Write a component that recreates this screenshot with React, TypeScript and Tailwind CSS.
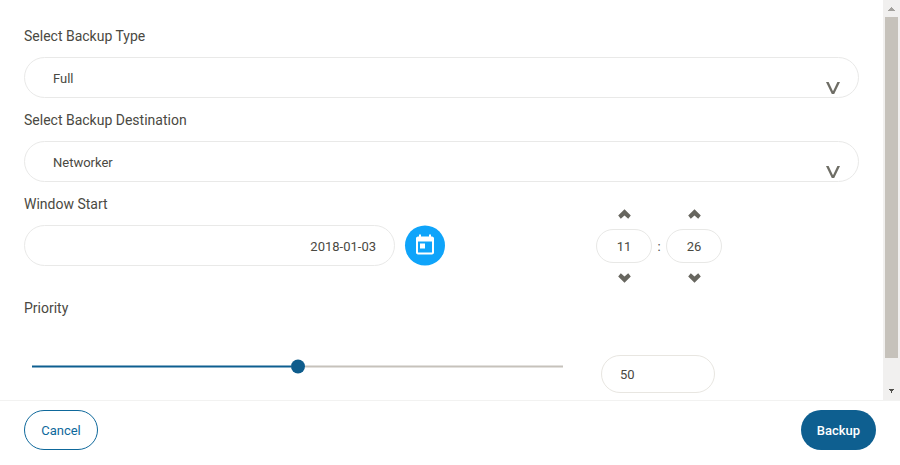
import React from "react";

function Label({ children }: { children: React.ReactNode }) {
  return <div className="h-5 text-[14px] leading-5 text-[#4a4942]">{children}</div>;
}

function SelectField({ label, value }: { label: string; value: string }) {
  return (
    <div className="h-[84px]">
      <Label>{label}</Label>
      <div className="mt-[11px] flex h-[41px] w-[835px] items-center justify-between rounded-[20.5px] border border-[#e9e9e8] pl-7 pr-[18px] text-[13px] text-[#4a4942]">
        <span className="pt-[2px]">{value}</span>
        <svg className="mt-[21px] h-3 w-[14px]" viewBox="0 0 14 12" fill="#6e6d65">
          <path d="M0 0h2.6L7 9.2 11.4 0H14L8.2 12H5.8Z" />
        </svg>
      </div>
    </div>
  );
}

function Chevron({ down = false }: { down?: boolean }) {
  return (
    <svg className={down ? "h-[10px] w-[13px] rotate-180" : "h-[10px] w-[13px]"} viewBox="0 0 13 10">
      <path d="M6.5 .2 12.8 6.5 10.2 9.7 6.5 6.6 2.8 9.7 .2 6.5Z" fill="#67665f" />
    </svg>
  );
}

function TimeSpinner({ value }: { value: string }) {
  return (
    <div className="flex w-14 flex-col items-center">
      <Chevron />
      <div className="my-[10px] flex h-[34px] w-14 items-center justify-center rounded-[17px] border border-[#e8e8e6] pt-px text-[13px] text-[#4a4942]">
        {value}
      </div>
      <Chevron down />
    </div>
  );
}

export default function App() {
  return (
    <div className="flex h-[465px] w-[900px] flex-col overflow-hidden bg-white font-['Roboto',sans-serif]">
      <div className="flex h-[400px]">
        <div className="w-[883px] overflow-hidden pl-6 pt-[26px]">
          <SelectField label="Select Backup Type" value="Full" />
          <SelectField label="Select Backup Destination" value="Networker" />
          <div className="flex h-[104px]">
            <div className="w-[572px]">
              <Label>Window Start</Label>
              <div className="mt-[11px] flex gap-[10px]">
                <div className="flex h-[41px] w-[371px] items-center justify-end rounded-[20.5px] border border-[#e9e9e8] pr-[18px] pt-[2px] text-[13px] text-[#4a4942]">
                  2018-01-03
                </div>
                <div className="flex h-10 w-10 translate-y-[0.5px] items-center justify-center rounded-full bg-[#0fa4fa]">
                  <svg className="h-6 w-6" viewBox="0 0 24 24" fill="#fff">
                    <path d="M19 3h-1V1h-2v2H8V1H6v2H5c-1.1 0-2 .9-2 2v14c0 1.1.9 2 2 2h14c1.1 0 2-.9 2-2V5c0-1.1-.9-2-2-2zm0 16H5V8h14v11zM7 10h5v5H7z" />
                  </svg>
                </div>
              </div>
            </div>
            <div className="flex pt-[15px]">
              <TimeSpinner value="11" />
              <div className="w-[14px] pt-[28px] text-center text-[13px] leading-5 text-[#4a4942]">:</div>
              <TimeSpinner value="26" />
            </div>
          </div>
          <Label>Priority</Label>
          <div className="flex pl-2 pt-[37px]">
            <div className="mt-[5px] flex h-[14px] w-[531px] -translate-y-[0.5px] items-center">
              <div className="h-[2px] w-[259px] bg-[#0e5f90]" />
              <div className="h-[14px] w-[14px] rounded-full bg-[#0e5c8c]" />
              <div className="h-[2px] flex-1 bg-[#c6c2bb]" />
            </div>
            <div className="ml-[38px] flex h-[38px] w-[114px] items-center rounded-[19px] border border-[#e8e6e1] pl-[18px] pt-[2px] text-[13px] text-[#4a4942]">
              50
            </div>
          </div>
        </div>
        <div className="flex w-[17px] flex-col bg-[#f1f0ef]">
          <div className="flex h-[17px] justify-center pt-[7px]">
            <svg className="h-1 w-[7px]" viewBox="0 0 7 4" shapeRendering="crispEdges" fill="#a3a19d">
              <path d="M3 0h1v1h1v1h1v1h1v1H0V3h1V2h1V1h1z" />
            </svg>
          </div>
          <div className="ml-[2px] h-[341px] w-[13px] bg-[#c6c2bb]" />
          <div className="flex flex-1 justify-center pt-[31px]">
            <svg className="h-1 w-[5px]" viewBox="0 0 5 4" shapeRendering="crispEdges" fill="#504f4b">
              <path d="M0 0h5v1H4v1H3v2H2V2H1V1H0z" />
            </svg>
          </div>
        </div>
      </div>
      <div className="flex h-[65px] items-start justify-between border-t border-[#f2f2f1] pl-6 pr-6 pt-[9px]">
        <button className="h-10 w-[74px] rounded-[20px] border border-[#0e689b] pt-[2px] text-[13px] text-[#0e689b]">Cancel</button>
        <button className="h-10 w-[75px] rounded-[20px] bg-[#0e5f90] pt-[2px] text-[13px] font-medium text-white">Backup</button>
      </div>
    </div>
  );
}
